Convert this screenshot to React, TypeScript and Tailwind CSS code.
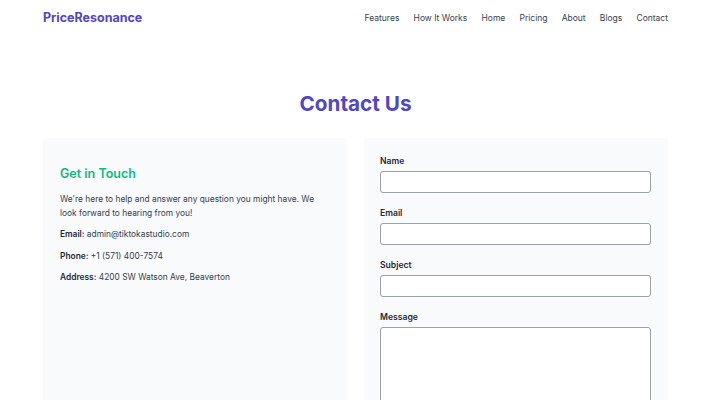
import React from "react";

export default function App() {
  const nav = ["Features", "How It Works", "Home", "Pricing", "About", "Blogs", "Contact"];
  const fields = ["Name", "Email", "Subject"];
  return (
    <div className="min-h-[400px] bg-white" style={{ fontFamily: "Inter, 'Noto Sans', sans-serif" }}>
      <header className="flex items-center justify-between px-[43px] h-[36px]">
        <div className="text-[12.5px] font-bold text-[#4f46c8]">PriceResonance</div>
        <nav className="flex items-center gap-[14.2px] text-[8.5px] text-[#374151]">
          {nav.map((n) => (
            <span key={n}>{n}</span>
          ))}
        </nav>
      </header>
      <h1 className="mt-[53px] text-center text-[20.7px] font-bold text-[#4f46c8] leading-[30px]">Contact Us</h1>
      <div className="mt-[19px] px-[43px] grid grid-cols-2 gap-[17px]">
        <div className="bg-[#f8fafc] rounded-[4px] p-[17px] pt-[27px] h-[300px]">
          <h2 className="text-[12.5px] font-semibold text-[#10b981] leading-[18px]">Get in Touch</h2>
          <p className="mt-[10px] text-[8.4px] leading-[13.5px] text-[#374151]">
            We're here to help and answer any question you might have. We look forward to hearing from you!
          </p>
          <p className="mt-[8px] text-[8.4px] leading-[13.5px] text-[#374151]">
            <span className="font-semibold text-[#1f2937]">Email:</span> admin@tiktokastudio.com
          </p>
          <p className="mt-[8px] text-[8.4px] leading-[13.5px] text-[#374151]">
            <span className="font-semibold text-[#1f2937]">Phone:</span> +1 (571) 400-7574
          </p>
          <p className="mt-[8px] text-[8.4px] leading-[13.5px] text-[#374151]">
            <span className="font-semibold text-[#1f2937]">Address:</span> 4200 SW Watson Ave, Beaverton
          </p>
        </div>
        <div className="bg-[#f8fafc] rounded-[4px] pl-[16px] pr-[17px] pt-[17px] h-[300px] flex flex-col gap-[14px]">
          {fields.map((f) => (
            <div key={f} className="flex flex-col">
              <label className="text-[8.6px] font-semibold text-[#1f2937] leading-[12px]">{f}</label>
              <div className="mt-[4px] h-[22px] bg-white border border-[#9ca3af] rounded-[3px]" />
            </div>
          ))}
          <div className="flex flex-col">
            <label className="text-[8.6px] font-semibold text-[#1f2937] leading-[12px]">Message</label>
            <div className="mt-[4px] h-[90px] bg-white border border-[#9ca3af] rounded-[3px]" />
          </div>
        </div>
      </div>
    </div>
  );
}
